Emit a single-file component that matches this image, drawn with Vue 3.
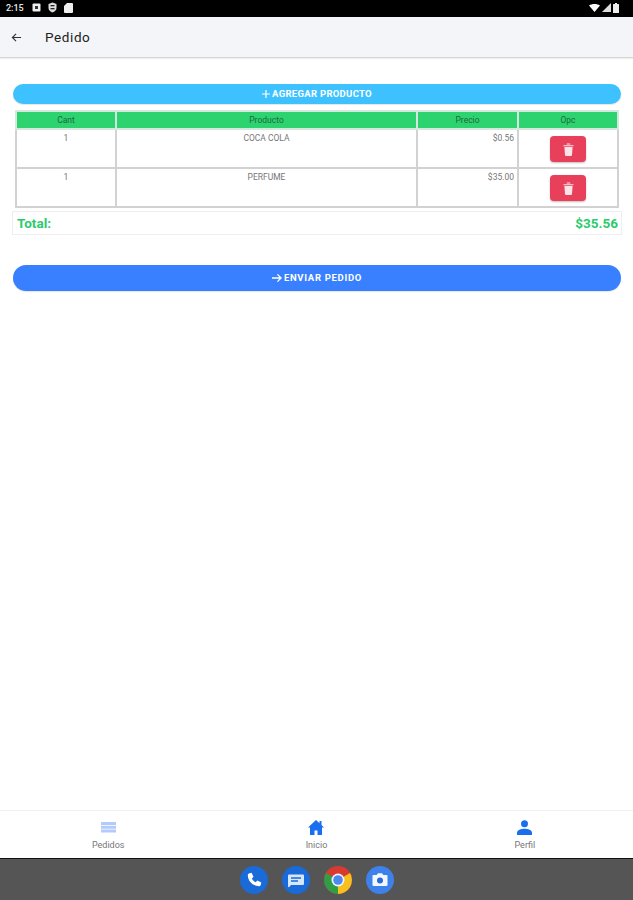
<template>
  <div class="screen">
    <div class="status-bar">
      <div class="status-left">
        <span class="clock">2:15</span>
        <svg width="9" height="9" viewBox="0 0 9 9"><rect x="0.5" y="0.5" width="8" height="8" rx="1" fill="#eee" /><rect x="3" y="3" width="3" height="3" fill="#333" /></svg>
        <svg width="9" height="11" viewBox="0 0 9 11"><path d="M4.5 0.5 8.5 2v4c0 2.2-1.8 3.8-4 4.5C2.300 9.800.5 8.200.5 6V2z" fill="#ddd" /><rect x="2.500" y="3" width="4" height="1.300" fill="#222" /><rect x="2.500" y="6" width="4" height="1.300" fill="#222" /></svg>
        <svg width="9" height="10" viewBox="0 0 9 10"><path d="M3 0h5a1 1 0 0 1 1 1v8a1 1 0 0 1-1 1H1a1 1 0 0 1-1-1V3z" fill="#eee" /></svg>
      </div>
      <div class="status-right">
        <svg width="11" height="8" viewBox="0 0 11 8"><path d="M0 1.500C3 -.5 8 -.5 11 1.500L5.500 8z" fill="#fff" /></svg>
        <svg width="9" height="9" viewBox="0 0 9 9"><path d="M9 0V9H0z" fill="#ddd" /></svg>
        <svg width="6" height="10" viewBox="0 0 6 10"><path d="M2 0h2v1h1.500a.5.5 0 0 1 .5.5V10H0V1.500A.5.500 0 0 1 .5 1H2z" fill="#eee" /></svg>
      </div>
    </div>

    <header class="toolbar">
      <svg class="back" width="11" height="11" viewBox="0 0 24 24"><path d="M22 12H4M11 4l-8 8 8 8" fill="none" stroke="#333" stroke-width="2.500" /></svg>
      <span class="title">Pedido</span>
    </header>

    <main class="content">
      <button class="btn btn-add">
        <svg width="8" height="8" viewBox="0 0 10 10"><path d="M5 0v10M0 5h10" stroke="#fff" stroke-width="1.500" /></svg>
        AGREGAR PRODUCTO
      </button>

      <table class="items">
        <thead>
          <tr>
            <th class="c-cant">Cant</th>
            <th class="c-prod">Producto</th>
            <th class="c-price">Precio</th>
            <th class="c-opc">Opc</th>
          </tr>
        </thead>
        <tbody>
          <tr v-for="item in items" :key="item.name">
            <td>{{ item.qty }}</td>
            <td>{{ item.name }}</td>
            <td class="price">{{ item.price }}</td>
            <td>
              <button class="btn-delete">
                <svg width="11" height="13" viewBox="0 0 11 13"><path d="M0.500 2.200h10v1.100H.5zM4 .6h3l.5 1h-4zM1.400 4h8.200l-.6 8a1 1 0 0 1-1 .9H3a1 1 0 0 1-1-.9z" fill="#fbe3e7" /></svg>
              </button>
            </td>
          </tr>
        </tbody>
      </table>

      <div class="total">
        <span>Total:</span>
        <span>$35.56</span>
      </div>

      <button class="btn btn-send">
        <svg width="10" height="10" viewBox="0 0 11 10"><path d="M0 5h10M6 1l4 4-4 4" fill="none" stroke="#fff" stroke-width="1.500" /></svg>
        ENVIAR PEDIDO
      </button>
    </main>

    <nav class="tabs">
      <div class="tab">
        <svg width="15" height="15" viewBox="0 0 15 15"><path d="M0 2h15v3H0zM0 5.800h15v3H0zM0 9.600h15v3H0z" fill="#b4c9fc" /></svg>
        <span>Pedidos</span>
      </div>
      <div class="tab">
        <svg width="16" height="15" viewBox="0 0 16 15"><path d="M8 0 0 7.500h2V15h4.500v-4.500h3V15H14V7.500h2L13.500 5V1h-2v2.200z" fill="#1a6fee" /></svg>
        <span>Inicio</span>
      </div>
      <div class="tab">
        <svg width="15" height="15" viewBox="0 0 15 15"><circle cx="7.500" cy="3.800" r="3.500" fill="#1a6fee" /><path d="M0 15v-2.500C0 10 4 8.700 7.500 8.700S15 10 15 12.500V15z" fill="#1a6fee" /></svg>
        <span>Perfil</span>
      </div>
    </nav>

    <div class="dock">
      <svg width="28" height="28" viewBox="0 0 28 28"><circle cx="14" cy="14" r="14" fill="#1a6ad8" /><path d="M9 7.500l2.500-.7 2 4-1.600 1.600c.8 1.800 2 3 3.800 3.800l1.600-1.600 4 2-.7 2.600c-.3.800-1 1-1.800 1C12.500 19.800 8 15.300 7.800 9.300c0-.8.400-1.500 1.200-1.800z" fill="#fff" /></svg>
      <svg width="28" height="28" viewBox="0 0 28 28"><circle cx="14" cy="14" r="14" fill="#1a6ad8" /><path d="M7 8.500h14a1 1 0 0 1 1 1V18a1 1 0 0 1-1 1H9l-2 2.200A1 1 0 0 1 6 20.500V9.500a1 1 0 0 1 1-1z" fill="#d6e6fb" /><path d="M9 12h10M9 15h7" stroke="#1a6ad8" stroke-width="1.300" /></svg>
      <svg width="28" height="28" viewBox="0 0 28 28">
        <circle cx="14" cy="14" r="14" fill="#d93a30" />
        <path d="M14 14 26.100 7A14 14 0 0 1 14 28z" fill="#f6c01e" />
        <path d="M14 14 14 28A14 14 0 0 1 1.900 7z" fill="#2f9e46" />
        <circle cx="14" cy="14" r="6.500" fill="#f2f4f8" />
        <circle cx="14" cy="14" r="4.800" fill="#4a8af0" />
      </svg>
      <svg width="28" height="28" viewBox="0 0 28 28"><circle cx="14" cy="14" r="14" fill="#3f81ea" /><path d="M7.500 9h3.200l1.300-1.800h4L17.300 9h3.200a1 1 0 0 1 1 1v9a1 1 0 0 1-1 1h-13a1 1 0 0 1-1-1v-9a1 1 0 0 1 1-1z" fill="#f2f6fd" /><circle cx="14" cy="14.500" r="3" fill="#2a6cd4" /></svg>
    </div>
  </div>
</template>

<script setup>
const items = [
  { qty: 1, name: 'COCA COLA', price: '$0.56' },
  { qty: 1, name: 'PERFUME', price: '$35.00' },
]
</script>

<style>
body {
  background: #fff;
}
</style>

<style scoped>
.screen {
  display: flex;
  flex-direction: column;
  width: 633px;
  height: 900px;
  overflow: hidden;
  background: #fff;
  font-family: Roboto, "Liberation Sans", sans-serif;
}

.status-bar {
  display: flex;
  flex: none;
  align-items: center;
  justify-content: space-between;
  height: 17px;
  padding: 0 14px 2px 6px;
  box-sizing: border-box;
  background: #000;
}

.status-left,
.status-right {
  display: flex;
  align-items: center;
}

.status-left {
  gap: 7px;
}

.status-right {
  gap: 2px;
}

.clock {
  margin-right: 1px;
  color: #e8e8e8;
  font-size: 9px;
  font-weight: 500;
}

.toolbar {
  display: flex;
  flex: none;
  align-items: center;
  height: 41px;
  padding-left: 11px;
  box-sizing: border-box;
  background: #f4f5f8;
  border-bottom: 1px solid #d4d4d6;
  box-shadow: 0 1px 1px rgba(0, 0, 0, 0.06);
}

.title {
  margin-left: 23px;
  color: #222;
  font-size: 13.500px;
  font-weight: 400;
  letter-spacing: 0.6px;
}

.content {
  flex: 1;
  padding: 26px 12px 0 13px;
}

.btn {
  display: flex;
  align-items: center;
  justify-content: center;
  gap: 2px;
  width: 608px;
  padding: 0 0 1px;
  border: none;
  border-radius: 10px;
  color: #fff;
  font-family: inherit;
  font-size: 9.500px;
  font-weight: 700;
  letter-spacing: 0.3px;
  box-shadow: 0 1px 1px rgba(0, 0, 0, 0.1);
}

.btn-add {
  height: 20px;
  background: #3dc2ff;
}

.btn-send {
  height: 26px;
  margin-top: 30px;
  background: #3880ff;
  border-radius: 13px;
  letter-spacing: 0.7px;
}

.items {
  width: 604px;
  margin: 6px 0 0 2px;
  border-collapse: collapse;
  table-layout: fixed;
  color: #777;
  font-size: 8.500px;
}

.items th {
  height: 16px;
  padding: 0;
  background: #2dd36f;
  border: 2px solid #d6e8dd;
  color: #1e6a3f;
  font-weight: 400;
  vertical-align: middle;
}

.items td {
  height: 39px;
  padding: 3px 3px 0;
  box-sizing: border-box;
  border: 2px solid #d2d2d2;
  text-align: center;
  vertical-align: top;
}

.items td.price {
  text-align: right;
}

.c-cant { width: 98px; }
.c-prod { width: 299px; }
.c-price { width: 99px; }
.c-opc { width: 98px; }

.btn-delete {
  display: flex;
  align-items: center;
  justify-content: center;
  width: 36px;
  height: 26px;
  margin: 3px auto 0;
  padding: 0;
  border: none;
  border-radius: 4px;
  background: #e8405a;
  box-shadow: 0 1px 2px rgba(0, 0, 0, 0.25);
}

.total {
  display: flex;
  align-items: center;
  justify-content: space-between;
  width: 610px;
  height: 24px;
  margin: 3px 0 0 -1px;
  padding: 0 3px 0 4px;
  box-sizing: border-box;
  border: 1px solid #eeeeee;
  color: #2bcb6c;
  font-size: 13.500px;
  font-weight: 700;
}

.tabs {
  display: flex;
  flex: none;
  height: 49px;
  padding: 0 4px;
  box-sizing: border-box;
  border-top: 1px solid #f0f0f0;
  border-bottom: 1px solid #111;
  background: #fff;
}

.tab {
  display: flex;
  flex: 1;
  flex-direction: column;
  align-items: center;
  gap: 5px;
  padding-top: 9px;
  color: #777;
  font-size: 9px;
}

.dock {
  display: flex;
  flex: none;
  align-items: center;
  justify-content: center;
  gap: 14px;
  height: 41px;
  background: #555556;
}
</style>
